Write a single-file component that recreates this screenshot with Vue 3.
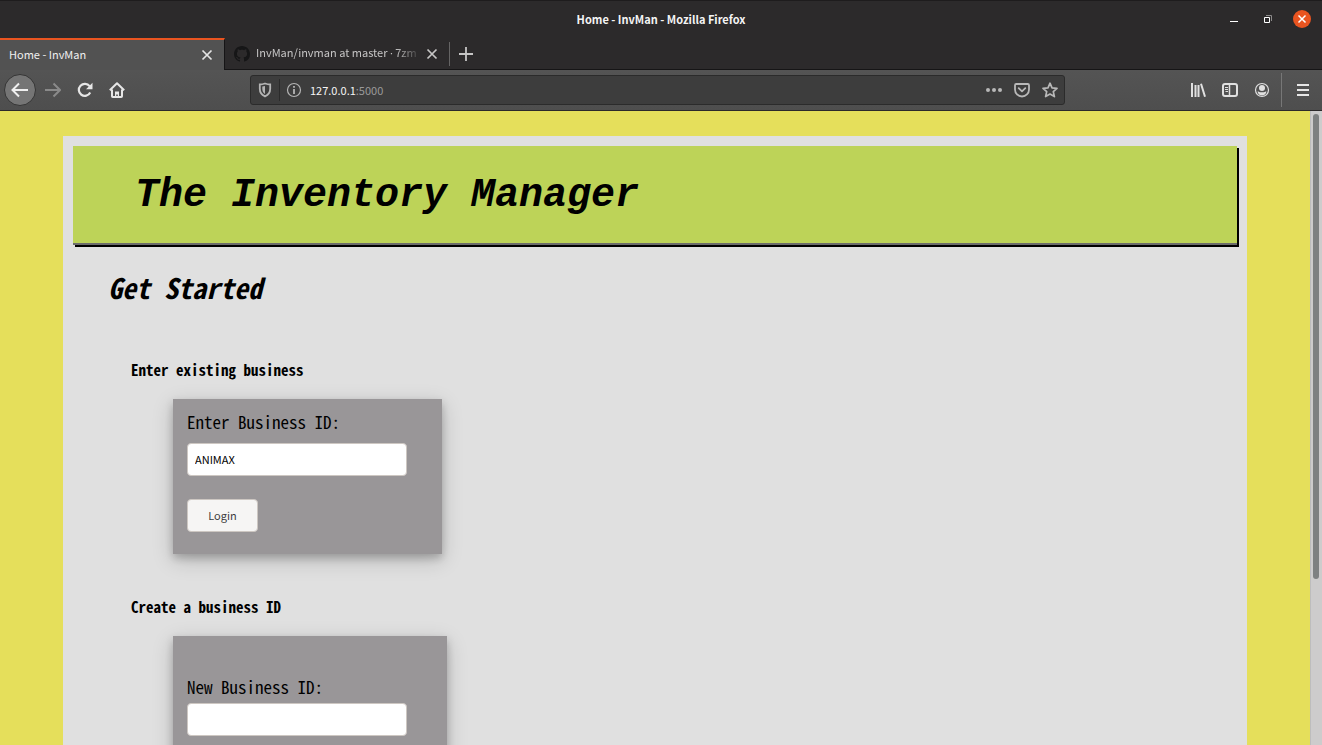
<script setup>
import { ref } from 'vue'

const url = ref('127.0.0.1:5000')
const businessId = ref('ANIMAX')
const newBusinessId = ref('')
</script>

<template>
  <div class="window">
    <header class="titlebar">
      <div class="window-title">Home - InvMan - Mozilla Firefox</div>
      <div class="window-controls">
        <button type="button" aria-label="Minimize">
          <svg width="18" height="18" viewBox="0 0 18 18"><path d="M5 11.5h8" stroke="#fff" /></svg>
        </button>
        <button type="button" aria-label="Restore">
          <svg width="18" height="18" viewBox="0 0 18 18" fill="none">
            <path d="M7 5.500h5.500v5.500" stroke="#8c8a8a" />
            <path d="M5.500 7.500h5v5h-5z" stroke="#fff" />
          </svg>
        </button>
        <button type="button" aria-label="Close window">
          <svg width="18" height="18" viewBox="0 0 18 18">
            <circle cx="9" cy="9" r="9" fill="#e95420" />
            <path d="M5.500 5.500l7 7M12.500 5.500l-7 7" stroke="#fff" stroke-width="1.500" />
          </svg>
        </button>
      </div>
    </header>

    <div class="tabs">
      <div class="tab active">
        <span class="tab-label">Home - InvMan</span>
        <button type="button" aria-label="Close Home tab">
          <svg width="12" height="12" viewBox="0 0 12 12"><path d="M1.500 1.500l9 9M10.500 1.500l-9 9" stroke="#e4e4e4" stroke-width="1.700" /></svg>
        </button>
      </div>
      <div class="tab">
        <svg class="favicon" width="16" height="16" viewBox="0 0 16 16">
          <path fill="#161617" d="M8 0C3.580 0 0 3.580 0 8c0 3.540 2.290 6.530 5.470 7.590.4.070.55-.17.55-.38 0-.19-.01-.82-.01-1.490-2.010.37-2.530-.49-2.690-.94-.09-.23-.48-.94-.82-1.130-.28-.15-.68-.52-.01-.53.63-.01 1.080.58 1.230.82.72 1.210 1.870.87 2.330.66.070-.52.28-.87.51-1.070-1.780-.2-3.640-.89-3.640-3.950 0-.87.31-1.590.82-2.150-.08-.2-.36-1.020.08-2.120 0 0 .67-.21 2.200.82.64-.18 1.320-.27 2-.27s1.360.09 2 .27c1.530-1.040 2.200-.82 2.200-.82.44 1.100.16 1.920.08 2.120.51.56.82 1.270.82 2.150 0 3.070-1.870 3.750-3.650 3.950.29.25.54.73.54 1.480 0 1.070-.01 1.930-.01 2.200 0 .21.15.46.55.38A8 8 0 0 0 16 8c0-4.420-3.580-8-8-8z" />
        </svg>
        <span class="tab-label faded">InvMan/invman at master <span class="dot">·</span> 7zm</span>
        <button type="button" aria-label="Close InvMan tab">
          <svg width="12" height="12" viewBox="0 0 12 12"><path d="M1.500 1.500l9 9M10.500 1.500l-9 9" stroke="#c6c5c5" stroke-width="1.700" /></svg>
        </button>
      </div>
      <button class="new-tab" type="button" aria-label="New tab">
        <svg width="14" height="14" viewBox="0 0 14 14"><path d="M7 0v14M0 7h14" stroke="#c6c5c5" stroke-width="1.800" /></svg>
      </button>
    </div>

    <nav class="toolbar">
      <div class="nav-buttons">
        <button class="back" type="button" aria-label="Back">
          <svg width="18" height="16" viewBox="0 0 18 16" fill="none" stroke="#f0f0f0" stroke-width="2"><path d="M17 8H2M8 1.500L1.500 8 8 14.500" /></svg>
        </button>
        <button type="button" aria-label="Forward">
          <svg width="16" height="16" viewBox="0 0 16 16" fill="none" stroke="#8a8a8a" stroke-width="2"><path d="M0 8h15M8.500 1.500L15 8l-6.500 6.500" /></svg>
        </button>
        <button type="button" aria-label="Reload">
          <svg width="16" height="16" viewBox="0 0 16 16" fill="none"><path d="M13.200 10.500a6 6 0 1 1-.6-6.300" stroke="#e6e6e6" stroke-width="2.200" /><path d="M15.500.8v6.400H9z" fill="#e6e6e6" /></svg>
        </button>
        <button type="button" aria-label="Home">
          <svg width="16" height="16" viewBox="0 0 16 16" fill="none" stroke="#e6e6e6" stroke-width="2"><path d="M.8 8.300L8 1.300l7.200 7M3 7.500v6.700c0 .5.300.8.800.8h8.400c.5 0 .8-.3.800-.8V7.500" stroke-linejoin="round" /><path d="M6 15v-5.500h4V15H8.800v-2.500H7.200V15z" fill="#e6e6e6" stroke="none" /></svg>
        </button>
      </div>

      <div class="urlbar">
        <button class="shield" type="button" aria-label="Tracking protection">
          <svg width="14" height="16" viewBox="0 0 14 16" fill="none"><path d="M7 1.500c2 .7 3.600 1 5.200 1v4.300c0 3.500-1.500 6-5.200 7.600-3.700-1.600-5.200-4.100-5.200-7.600V2.500c1.600 0 3.200-.3 5.200-1z" stroke="#b4b4b4" stroke-width="1.800" /><path d="M7 4v8C5 10.700 4.300 9 4.300 6.800V4.600z" fill="#b4b4b4" /></svg>
        </button>
        <button class="info" type="button" aria-label="Site information">
          <svg width="16" height="16" viewBox="0 0 16 16"><circle cx="8" cy="8" r="6.500" fill="none" stroke="#b4b4b4" stroke-width="1.200" /><path d="M8 7v5M8 4v1.800" stroke="#b4b4b4" stroke-width="1.800" /></svg>
        </button>
        <div class="address">
          <span class="address-text" aria-hidden="true">127.0.0.1<span>:5000</span></span>
          <input v-model="url" aria-label="Address" type="text" />
        </div>
        <div class="page-actions">
          <button type="button" aria-label="Page actions">
            <svg width="16" height="16" viewBox="0 0 16 16" fill="#b8b8b8"><circle cx="2" cy="8" r="2" /><circle cx="8" cy="8" r="2" /><circle cx="14" cy="8" r="2" /></svg>
          </button>
          <button type="button" aria-label="Save to Pocket">
            <svg width="16" height="16" viewBox="0 0 16 16" fill="none" stroke="#b8b8b8" stroke-width="1.800"><path d="M2.200 2h11.600c.7 0 1.200.5 1.200 1.200V7.500a7 7 0 0 1-14 0V3.200C1 2.500 1.500 2 2.200 2z" /><path d="M4.700 6.200L8 9.400l3.300-3.200" stroke-linecap="round" stroke-linejoin="round" /></svg>
          </button>
          <button type="button" aria-label="Bookmark this page">
            <svg width="16" height="16" viewBox="0 0 16 16" fill="none" stroke="#b8b8b8" stroke-width="1.700" stroke-linejoin="round"><path d="M8 1.200l2 4.600 5 .5-3.700 3.300 1.100 5L8 12l-4.400 2.600 1.100-5L1 6.300l5-.5z" /></svg>
          </button>
        </div>
      </div>

      <div class="tools">
        <button type="button" aria-label="Library">
          <svg width="16" height="16" viewBox="0 0 16 16" stroke="#e0e0e0" stroke-width="2"><path d="M2 1v14M5.500 3v12M8.500 3v12M11 1.800l4 13" /></svg>
        </button>
        <button type="button" aria-label="Sidebars">
          <svg width="16" height="16" viewBox="0 0 16 16" fill="none" stroke="#e0e0e0"><rect x="1" y="2" width="14" height="12" rx="2" stroke-width="2" /><path d="M7.500 2v12" stroke-width="1.500" /><path d="M3 5.500h3M3 7.500h3M3.500 9.500H6" /></svg>
        </button>
        <button type="button" aria-label="Account">
          <svg width="16" height="16" viewBox="0 0 16 16"><circle cx="8" cy="8" r="6.500" fill="none" stroke="#e0e0e0" stroke-width="1.200" /><circle cx="8" cy="6" r="3" fill="#e0e0e0" /><path d="M3.500 9.500c1.200 0 2 .8 4.500.8s3.300-.8 4.500-.8c-.5 2.500-2.300 4-4.500 4s-4-1.500-4.500-4z" fill="#e0e0e0" /></svg>
        </button>
        <button class="menu" type="button" aria-label="Menu">
          <svg width="12" height="14" viewBox="0 0 12 14" stroke="#e6e6e6" stroke-width="2"><path d="M0 2h12M0 7h12M0 12h12" /></svg>
        </button>
      </div>
    </nav>

    <div class="viewport">
      <main class="page">
        <div class="content">
          <div class="banner"><h1>The Inventory Manager</h1></div>
          <h2>Get Started</h2>

          <section>
            <h4>Enter existing business</h4>
            <form class="card login" @submit.prevent>
              <label for="business-id">Enter Business ID:</label>
              <input id="business-id" v-model="businessId" type="text" />
              <button type="submit">Login</button>
            </form>
          </section>

          <section>
            <h4>Create a business ID</h4>
            <form class="card create" @submit.prevent>
              <label for="new-business-id">New Business ID:</label>
              <input id="new-business-id" v-model="newBusinessId" type="text" />
            </form>
          </section>
        </div>
      </main>
      <div class="scrollbar"><div class="thumb"></div></div>
    </div>
  </div>
</template>

<style>
body {
  margin: 0;
}
</style>

<style scoped>
* {
  box-sizing: border-box;
}

.window {
  display: flex;
  flex-direction: column;
  height: 100vh;
  overflow: hidden;
  font-family: "Noto Sans CJK SC", "Noto Sans", sans-serif;
  font-size: 11px;
  line-height: 18px;
}

svg {
  display: block;
}

button {
  flex: none;
  margin: 0;
  padding: 0;
  border: 0;
  background: none;
  font: inherit;
}

.titlebar {
  display: grid;
  grid-template-columns: 1fr auto 1fr;
  align-items: center;
  flex: none;
  height: 38px;
  padding-bottom: 1px;
  background: #2c2a2b;
  border-top: 1px solid #1e1c1d;
  color: #f4f4f4;
}

.window-title {
  grid-column: 2;
  font-weight: 700;
}

.window-controls {
  display: flex;
  justify-content: flex-end;
  align-items: center;
  gap: 16px;
  padding-right: 11px;
}

.tabs {
  display: flex;
  flex: none;
  height: 32px;
  background: #2c2a2b;
}

.tab {
  display: flex;
  align-items: center;
  width: 224px;
  padding: 0 11px 0 9px;
  border-bottom: 1px solid #161516;
  color: #c6c5c5;
}

.tab.active {
  width: 225px;
  border-top: 2px solid #e95420;
  border-right: 1px solid #161516;
  border-bottom: 0;
  background: #525252;
  color: #f0f0f0;
}

.tab-label {
  flex: 1;
  padding-bottom: 2px;
  white-space: nowrap;
}

.faded {
  margin: 0 4px 0 6px;
  mask-image: linear-gradient(to right, #000 84%, transparent 100%);
}

.dot {
  font-family: "Open Sans", sans-serif;
}

.new-tab {
  display: flex;
  align-items: center;
  flex: 1;
  padding-left: 10px;
  border-bottom: 1px solid #161516;
  background: linear-gradient(#656464, #656464) 0 4px / 1px 24px no-repeat;
}

.toolbar {
  display: flex;
  align-items: center;
  flex: none;
  height: 41px;
  background: linear-gradient(#545454, #4e4e4e);
  border-bottom: 1px solid #2c2a2b;
}

.nav-buttons {
  display: flex;
  align-items: center;
  gap: 16px;
  width: 250px;
  padding-left: 4px;
}

.back {
  display: grid;
  place-items: center;
  width: 32px;
  height: 32px;
  margin-right: -7px;
  border: 1px solid #353535;
  border-radius: 50%;
  background: #757575;
}

.urlbar {
  display: flex;
  align-items: center;
  flex: 1;
  height: 30px;
  border: 1px solid #2b2b2b;
  border-radius: 3px;
  background: #3d3d3d;
}

.shield {
  display: grid;
  place-items: center;
  width: 29px;
  height: 22px;
  border-right: 1px solid #2b2b2b;
}

.info {
  margin: 0 8px 0 6px;
}

.address {
  display: grid;
  flex: 1;
}

.address > * {
  grid-area: 1 / 1;
}

.address-text {
  color: #f5f5f5;
}

.address-text span {
  color: #9a9a9a;
}

.address input {
  min-width: 0;
  padding: 0;
  border: 0;
  outline: 0;
  background: none;
  color: transparent;
  font: inherit;
}

.page-actions {
  display: flex;
  gap: 12px;
  padding-right: 6px;
}

.tools {
  display: flex;
  align-items: center;
  justify-content: flex-end;
  gap: 16px;
  width: 257px;
  padding-right: 13px;
}

.menu {
  display: flex;
  align-items: center;
  height: 34px;
  margin-left: -5px;
  padding-left: 15px;
  border-left: 1px solid #777;
}

.viewport {
  display: flex;
  flex: 1;
  min-height: 0;
}

.page {
  flex: 1;
  overflow: hidden;
  padding: 25px 63px 0;
  background: #e5df5b;
  color: #000;
}

.content {
  min-height: 100%;
  padding: 10px;
  background: #e0e0e0;
  font-family: "Liberation Mono", monospace;
}

.banner {
  padding: 23px 62px 21px;
  background: #bdd358;
  border-bottom: 2px solid #6c6c6c;
  box-shadow: 2px 2px #000;
}

h1 {
  margin: 0;
  font-size: 40px;
  font-style: italic;
  line-height: 53px;
}

h2 {
  margin: 26px 35px 0;
  font-family: "Noto Sans Mono CJK SC", "Liberation Mono", monospace;
  font-size: 28px;
  font-style: italic;
  line-height: 32px;
}

section {
  padding: 58px 58px 0;
}

section + section {
  padding-top: 44px;
}

h4 {
  margin: 0;
  font-family: "Noto Sans Mono CJK SC", "Liberation Mono", monospace;
  font-size: 15px;
  line-height: 18px;
}

.card {
  display: flex;
  flex-direction: column;
  align-items: flex-start;
  margin: 20px 0 0 42px;
  padding: 13px 14px;
  background: #999698;
  box-shadow: 0 4px 8px rgba(0, 0, 0, 0.2), 0 6px 20px rgba(0, 0, 0, 0.19);
}

.login {
  width: 269px;
  padding-bottom: 22px;
}

.create {
  width: 274px;
  padding-top: 41px;
  padding-bottom: 42px;
}

.card label {
  font-family: "Noto Sans Mono CJK SC", "Liberation Mono", monospace;
  font-size: 17px;
  line-height: 20px;
}

.card input {
  width: 220px;
  height: 33px;
  margin-top: 11px;
  padding: 0 7px 2px;
  border: 1px solid #cdc7c2;
  border-radius: 4px;
  background: #fff;
  color: #000;
  font-family: "Noto Sans CJK SC", sans-serif;
  font-size: 11px;
}

.create input {
  margin-top: 6px;
}

.card button {
  width: 71px;
  height: 33px;
  margin-top: 23px;
  padding-bottom: 2px;
  border: 1px solid #cdc7c2;
  border-radius: 4px;
  background: #f6f5f4;
  color: #3d3d3d;
  font-family: "Noto Sans CJK SC", sans-serif;
  font-size: 11px;
}

.scrollbar {
  flex: none;
  width: 12px;
  padding: 3px 3px 3px 2px;
  border-left: 1px solid #bdbdbd;
  background: #cdcccc;
}

.thumb {
  width: 6px;
  height: 74%;
  border-radius: 3px;
  background: #7e8181;
}
</style>
